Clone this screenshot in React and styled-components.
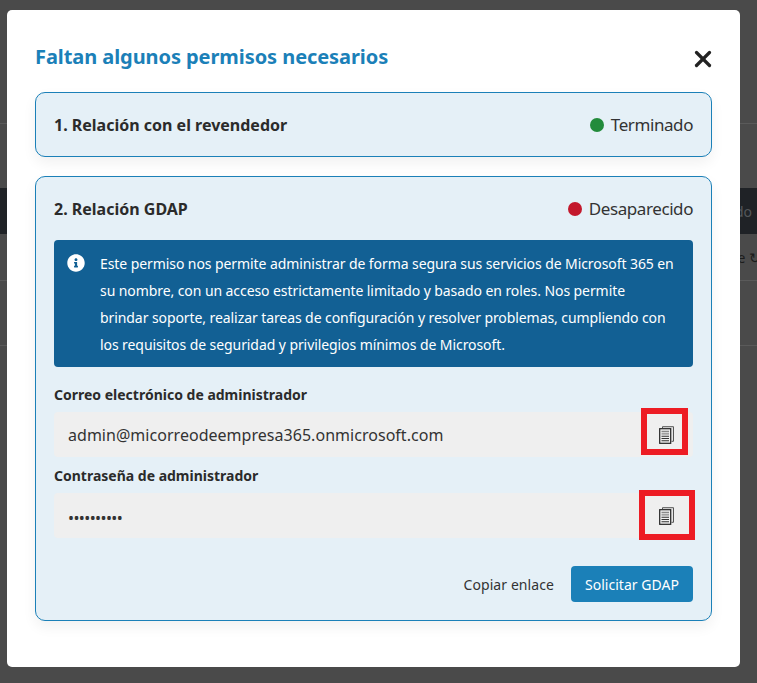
import React from "react";
import styled, { createGlobalStyle } from "styled-components";
import { X } from "lucide-react";
import { FaInfoCircle } from "react-icons/fa";

const GlobalStyle = createGlobalStyle`
  html, body {
    margin: 0;
    padding: 0;
    background: #4a4a4a;
    font-family: "Noto Sans", "Liberation Sans", sans-serif;
  }
`;

const Page = styled.div`
  position: relative;
  height: 683px;
  overflow: hidden;
  background: #4a4a4a;
`;

const BackdropRow = styled.div`
  display: flex;
  justify-content: flex-end;
  align-items: center;
  height: ${(p) => p.$h}px;
  padding-right: ${(p) => p.$pr || 0}px;
  border-bottom: ${(p) => (p.$line ? "1px solid #5a5a5a" : "0")};
  background: ${(p) => (p.$dark ? "#1f2226" : "transparent")};
  color: ${(p) => (p.$dark ? "#54575a" : "#1c1c1c")};
  font-size: 14px;
  white-space: nowrap;
`;

const ClippedText = styled.span`
  margin-right: -4px;
`;

const Modal = styled.div`
  position: absolute;
  left: 7px;
  top: 10px;
  width: 733px;
  height: 657px;
  box-sizing: border-box;
  padding: 28px 28px 0;
  background: #fff;
  border-radius: 5px;
`;

const Header = styled.div`
  display: flex;
  justify-content: space-between;
  align-items: center;
  height: 38px;
  margin-bottom: 16px;
`;

const Title = styled.h2`
  margin: 0 0 2px;
  font-size: 20px;
  font-weight: 700;
  letter-spacing: -0.07px;
  color: #1b80b8;
`;

const CloseButton = styled.button`
  display: flex;
  padding: 0;
  margin: 4px -4px 0 0;
  border: 0;
  background: none;
  color: #222;
`;

const Card = styled.section`
  box-sizing: border-box;
  border: 1px solid #1b80b8;
  border-radius: 10px;
  background: #e5f0f7;
  box-shadow: 0 6px 14px rgba(0, 0, 0, 0.06);
  padding: 0 18px;
  margin-bottom: 19px;
`;

const CardHead = styled.div`
  display: flex;
  justify-content: space-between;
  align-items: center;
  height: 63px;
`;

const CardTitle = styled.h3`
  margin: 0;
  font-size: 16px;
  font-weight: 700;
  color: #2b2b2b;
`;

const Status = styled.div`
  display: flex;
  align-items: center;
  gap: 7px;
  font-size: 17px;
  letter-spacing: -0.42px;
  color: #333;
`;

const Dot = styled.span`
  width: 14px;
  height: 14px;
  border-radius: 50%;
  background: ${(p) => p.$color};
`;

const Notice = styled.div`
  display: flex;
  gap: 15px;
  height: 127px;
  box-sizing: border-box;
  padding: 10px 18px 0 13px;
  border-radius: 4px;
  background: #126094;
  color: #fff;
  font-size: 14px;
  line-height: 27px;
  letter-spacing: -0.08px;

  svg {
    flex: none;
    margin-top: 4px;
  }
`;

const Field = styled.div`
  margin-top: ${(p) => p.$top}px;
`;

const Label = styled.label`
  display: block;
  height: 26px;
  font-size: 14px;
  line-height: 18px;
  font-weight: 700;
  color: #2b2b2b;
`;

const InputRow = styled.div`
  display: flex;
  align-items: center;
  justify-content: space-between;
  height: 45px;
  padding-left: 14px;
  border-radius: 4px;
  background: #efefef;
  font-size: 16px;
  letter-spacing: 0.03px;
  color: #333;
`;

const Dots = styled.span`
  letter-spacing: -0.6px;
  transform: translateY(2px);
`;

const CopyBox = styled.div`
  position: relative;
  display: flex;
  align-items: center;
  justify-content: center;
  width: 54px;
  height: 45px;
`;

const Highlight = styled.span`
  position: absolute;
  top: ${(p) => p.$top}px;
  left: ${(p) => p.$left}px;
  width: ${(p) => p.$w}px;
  height: ${(p) => p.$h}px;
  box-sizing: border-box;
  border: 6px solid #ed1c24;
`;

const Actions = styled.div`
  display: flex;
  justify-content: flex-end;
  align-items: center;
  gap: 17px;
  margin-top: 28px;
  padding-bottom: 18px;
`;

const TextLink = styled.a`
  font-size: 14px;
  letter-spacing: 0.08px;
  color: #333;
`;

const PrimaryButton = styled.button`
  height: 36px;
  width: 122px;
  padding: 0;
  border: 0;
  border-radius: 4px;
  background: #1b80b8;
  color: #fff;
  font: inherit;
  font-size: 14px;
  letter-spacing: 0.04px;
`;

function CopyIcon() {
  return (
    <svg width="15" height="18" viewBox="0 0 15 18" fill="none">
      <path d="M3.5 2V.7h11v14.6H12.5" stroke="#555" strokeWidth="1" fill="#e6e6e6" />
      <rect x=".7" y="2.7" width="11" height="14.6" fill="#efefef" stroke="#222" strokeWidth="1.2" />
      <path d="M2.5 5.5h7.5M2.5 7.8h7.5" stroke="#888" strokeWidth="1.3" />
      <path d="M2.5 10.2h7.5M2.5 12.5h7.5M2.5 14.8h7.5" stroke="#333" strokeWidth="1.1" />
    </svg>
  );
}

export default function App() {
  return (
    <Page>
      <GlobalStyle />
      <BackdropRow $h={123} $line />
      <BackdropRow $h={64} />
      <BackdropRow $h={46} $dark $pr={5}>do</BackdropRow>
      <BackdropRow $h={46} $line><ClippedText>e ↻</ClippedText></BackdropRow>
      <BackdropRow $h={64} $line />
      <Modal>
        <Header>
          <Title>Faltan algunos permisos necesarios</Title>
          <CloseButton aria-label="Cerrar">
            <X size={26} strokeWidth={3} />
          </CloseButton>
        </Header>
        <Card>
          <CardHead>
            <CardTitle>1. Relación con el revendedor</CardTitle>
            <Status>
              <Dot $color="#228b3b" />
              Terminado
            </Status>
          </CardHead>
        </Card>
        <Card>
          <CardHead>
            <CardTitle>2. Relación GDAP</CardTitle>
            <Status>
              <Dot $color="#c3182c" />
              Desaparecido
            </Status>
          </CardHead>
          <Notice>
            <FaInfoCircle size={18} />
            <div>
              Este permiso nos permite administrar de forma segura sus servicios de Microsoft 365 en su nombre, con un acceso estrictamente limitado y basado en roles. Nos permite brindar soporte, realizar tareas de configuración y resolver problemas, cumpliendo con los requisitos de seguridad y privilegios mínimos de Microsoft.
            </div>
          </Notice>
          <Field $top={19}>
            <Label>Correo electrónico de administrador</Label>
            <InputRow>
              admin@micorreodeempresa365.onmicrosoft.com
              <CopyBox>
                <Highlight $top={-4} $left={2} $w={47} $h={47} />
                <CopyIcon />
              </CopyBox>
            </InputRow>
          </Field>
          <Field $top={10}>
            <Label>Contraseña de administrador</Label>
            <InputRow>
              <Dots>••••••••••</Dots>
              <CopyBox>
                <Highlight $top={-3} $left={0} $w={56} $h={50} />
                <CopyIcon />
              </CopyBox>
            </InputRow>
          </Field>
          <Actions>
            <TextLink>Copiar enlace</TextLink>
            <PrimaryButton>Solicitar GDAP</PrimaryButton>
          </Actions>
        </Card>
      </Modal>
    </Page>
  );
}
